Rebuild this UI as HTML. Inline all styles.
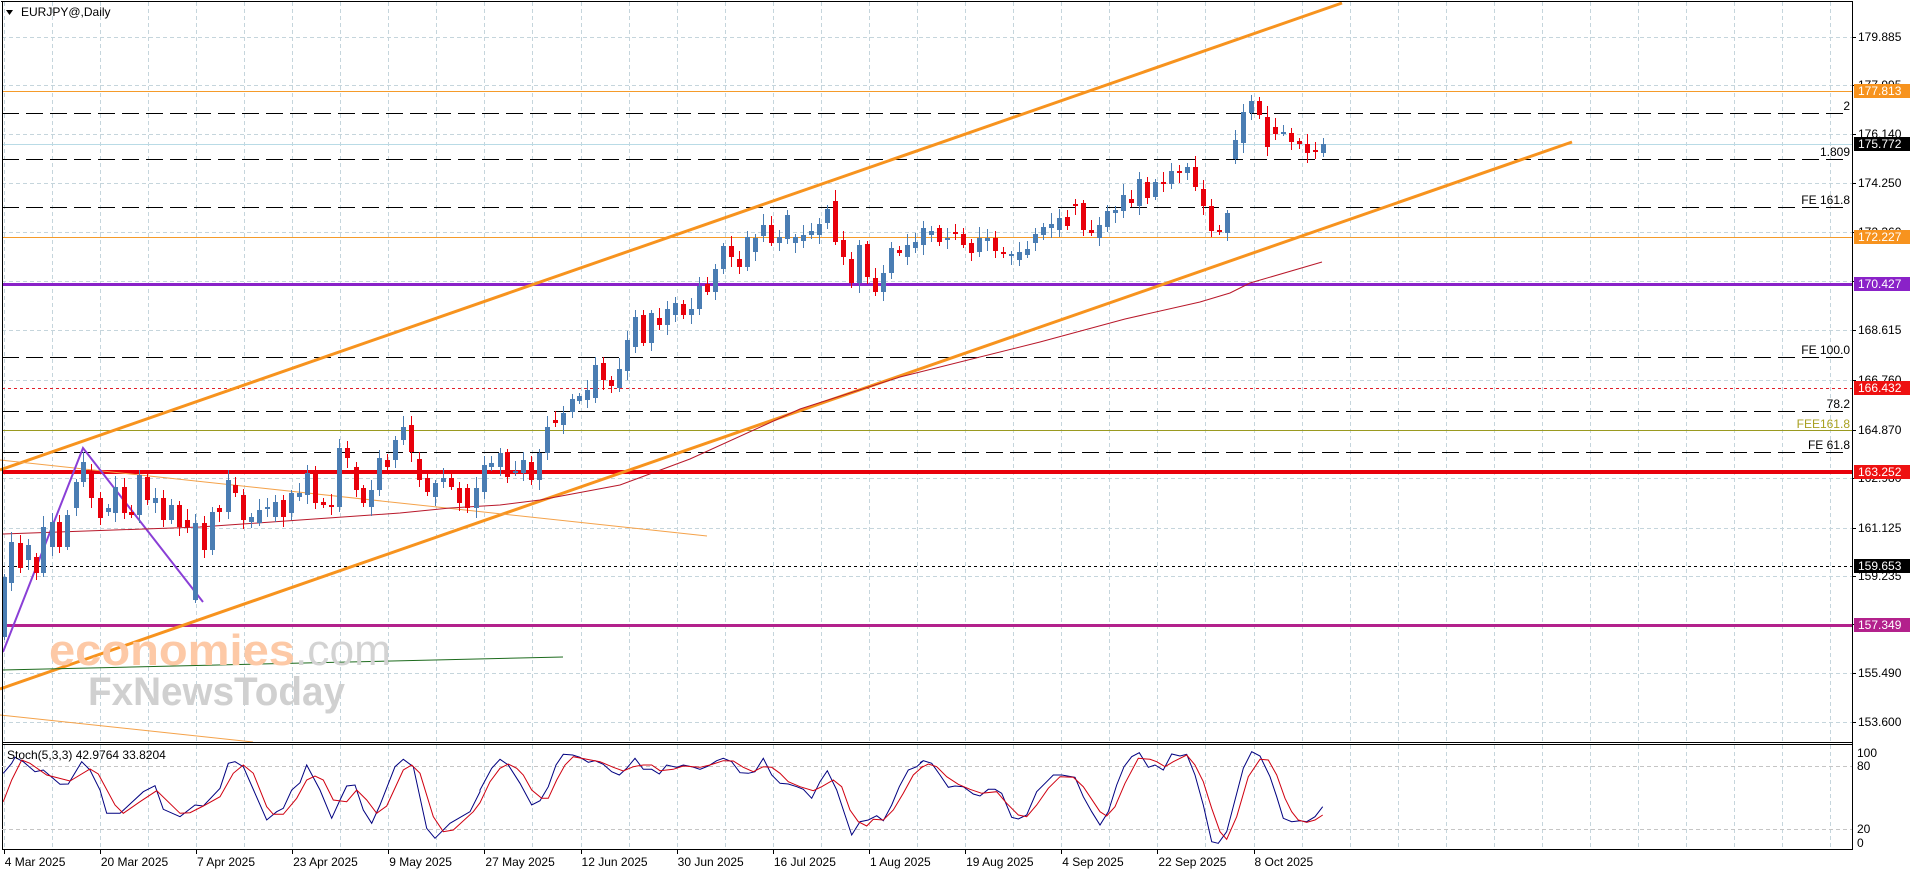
<!DOCTYPE html>
<html><head><meta charset="utf-8"><style>
html,body{margin:0;padding:0;background:#fff;}
svg{display:block;font-family:"Liberation Sans",sans-serif;}
</style></head><body>
<svg id="s" width="1916" height="874" xmlns="http://www.w3.org/2000/svg">
<rect width="1916" height="874" fill="#fff"/>
<g id="grid" stroke="#c5d5dc" stroke-width="1" stroke-dasharray="4,3"></g>
<g>
<line x1="2" y1="144.5" x2="1852" y2="144.5" stroke="#b9dbe6" stroke-width="1"/>
<line x1="2" y1="91.5" x2="1852" y2="91.5" stroke="#f59b2a" stroke-width="1"/>
<line x1="2" y1="237.5" x2="1852" y2="237.5" stroke="#f59b2a" stroke-width="1"/>
<g stroke="#000" stroke-width="1" stroke-dasharray="17,7">
<line x1="2" y1="113.5" x2="1850" y2="113.5"/>
<line x1="2" y1="159.5" x2="1850" y2="159.5"/>
<line x1="2" y1="207.5" x2="1850" y2="207.5"/>
<line x1="2" y1="357.5" x2="1850" y2="357.5"/>
<line x1="2" y1="411.5" x2="1850" y2="411.5"/>
<line x1="2" y1="452.5" x2="1850" y2="452.5"/>
</g>
<line x1="2" y1="430.5" x2="1852" y2="430.5" stroke="#9a9a20" stroke-width="1"/>
<line x1="2" y1="388.5" x2="1852" y2="388.5" stroke="#e0202a" stroke-width="1" stroke-dasharray="3,3"/>
<line x1="2" y1="566.5" x2="1852" y2="566.5" stroke="#000" stroke-width="1" stroke-dasharray="3,3"/>
<line x1="2" y1="284.5" x2="1852" y2="284.5" stroke="#8a22c8" stroke-width="3"/>
<line x1="2" y1="472" x2="1852" y2="472" stroke="#e8000b" stroke-width="4"/>
<line x1="2" y1="625.5" x2="1852" y2="625.5" stroke="#b3218c" stroke-width="3"/>
</g>
<line x1="0" y1="470" x2="1342" y2="3" stroke="#f7931e" stroke-width="3"/>
<line x1="0" y1="689" x2="1572" y2="142" stroke="#f7931e" stroke-width="3"/>
<line x1="0" y1="460" x2="707" y2="536" stroke="#f4a24a" stroke-width="1"/>
<line x1="0" y1="715" x2="253" y2="742" stroke="#f4a24a" stroke-width="1"/>
<line x1="2" y1="670" x2="563" y2="657" stroke="#1d6b1d" stroke-width="1"/>
<polyline points="3,652 83,448 203,602" fill="none" stroke="#8a3fd6" stroke-width="2"/>
<polyline fill="none" stroke="#b8182a" stroke-width="1" points="3,534 200,527 300,520 400,513 450,508 500,505 540,500 620,485 690,459 800,409 900,377 1040,342 1125,319 1200,302 1230,293 1250,283 1322,262"/>
<g id="candles"></g>
<text x="49" y="665" font-size="44" font-weight="bold" fill="#fdc9a6" textLength="246" lengthAdjust="spacingAndGlyphs">economies</text>
<text x="295" y="665" font-size="44" fill="#d3d3d3" textLength="96" lengthAdjust="spacingAndGlyphs">.com</text>
<text x="88" y="705" font-size="40" font-weight="bold" fill="#d0d0d0" textLength="257" lengthAdjust="spacingAndGlyphs">FxNewsToday</text>
<g font-size="12" fill="#000" text-anchor="end">
<text x="1850" y="110">2</text>
<text x="1850" y="156">1.809</text>
<text x="1850" y="204">FE 161.8</text>
<text x="1850" y="354">FE 100.0</text>
<text x="1850" y="408">78.2</text>
<text x="1850" y="428" fill="#a8a020">FEE161.8</text>
<text x="1850" y="449">FE 61.8</text>
</g>
<g stroke="#000" stroke-width="1" fill="none">
<line x1="1" y1="1.5" x2="1852" y2="1.5"/>
<line x1="2.5" y1="1" x2="2.5" y2="850"/>
<line x1="1852.5" y1="1" x2="1852.5" y2="850"/>
<line x1="2" y1="742.5" x2="1852" y2="742.5"/>
<line x1="2" y1="744.5" x2="1852" y2="744.5"/>
<line x1="2" y1="849.5" x2="1852" y2="849.5"/>
</g>
<g id="ticks" stroke="#000"></g>
<polygon points="6,10 13,10 9.5,15" fill="#000"/>
<text x="21" y="16" font-size="12" fill="#000">EURJPY@,Daily</text>
<g id="axis" font-size="12" fill="#000"></g>
<line x1="2" y1="766.5" x2="1852" y2="766.5" stroke="#c5c5c5" stroke-dasharray="4,3"/>
<line x1="2" y1="829.5" x2="1852" y2="829.5" stroke="#c5c5c5" stroke-dasharray="4,3"/>
<polyline id="st1" fill="none" stroke="#000080" stroke-width="1"/>
<polyline id="st2" fill="none" stroke="#d00010" stroke-width="1"/>
<text x="7" y="759" font-size="12" fill="#000">Stoch(5,3,3) 42.9764 33.8204</text>
<g font-size="12" fill="#000">
<text x="1857" y="757">100</text><text x="1857" y="770">80</text>
<text x="1857" y="833">20</text><text x="1857" y="847">0</text>
</g>
<g id="dates" font-size="12" fill="#000"></g>
</svg>
<script>
var NS="http://www.w3.org/2000/svg";
function el(p,t,a,txt){var e=document.createElementNS(NS,t);for(var k in a)e.setAttribute(k,a[k]);if(txt!=null)e.textContent=txt;p.appendChild(e);return e;}
var g=document.getElementById('grid');
for(var x=3.7;x<1852;x+=48.07){var xx=Math.round(x)+0.5;el(g,'line',{x1:xx,y1:2,x2:xx,y2:742});el(g,'line',{x1:xx,y1:745,x2:xx,y2:849});}
var hy=[37,85,134,183,232,281,330,380,430,478,528,576,624,673,722];
hy.forEach(function(y){el(g,'line',{x1:2,y1:y+0.5,x2:1852,y2:y+0.5});});
var tk=document.getElementById('ticks');
hy.forEach(function(y){el(tk,'line',{x1:1852,y1:y+0.5,x2:1856,y2:y+0.5});});
var ax=document.getElementById('axis');
var labs=[[37,'179.885'],[85,'177.995'],[134,'176.140'],[183,'174.250'],[232,'172.360'],[330,'168.615'],[380,'166.760'],[430,'164.870'],[478,'162.980'],[528,'161.125'],[576,'159.235'],[624,'157.345'],[673,'155.490'],[722,'153.600']];
labs.forEach(function(l){el(ax,'text',{x:1858,y:l[0]+4},l[1]);});
var boxes=[[91,'177.813','#f7931e','#fff'],[144,'175.772','#000','#fff'],[237,'172.227','#f7931e','#fff'],[284,'170.427','#8a22c8','#fff'],[388,'166.432','#ee1111','#fff'],[472,'163.252','#ee1111','#fff'],[566,'159.653','#000','#fff'],[625,'157.349','#b3218c','#fff']];
boxes.forEach(function(b){el(ax,'rect',{x:1854,y:b[0]-7,width:56,height:14,fill:b[2]});el(ax,'text',{x:1858,y:b[0]+4,fill:b[3]},b[1]);});
var B=[[4,577,637,'b'],[11,542,583,'b'],[20,543,568,'r'],[28,545,560,'b'],[36,557,573,'r'],[43,527,573,'b'],[52,522,547,'b'],[59,522,547,'r'],[67,515,547,'b'],[76,482,508,'b'],[83,462,482,'b'],[91,472,498,'r'],[100,498,518,'r'],[108,508,512,'b'],[115,487,513,'b'],[124,487,513,'r'],[131,512,515,'r'],[139,475,515,'b'],[147,477,500,'r'],[155,498,503,'b'],[163,498,520,'r'],[171,505,520,'b'],[179,505,527,'r'],[187,520,527,'r'],[195,523,600,'b'],[204,523,550,'r'],[212,512,550,'b'],[219,508,512,'r'],[228,480,512,'b'],[235,485,493,'r'],[243,495,520,'r'],[251,517,522,'b'],[259,510,523,'b'],[267,507,509,'b'],[275,502,517,'b'],[283,500,517,'r'],[291,493,513,'b'],[299,493,497,'b'],[307,473,495,'b'],[315,472,503,'r'],[323,502,505,'r'],[331,505,507,'r'],[339,448,507,'b'],[347,448,458,'r'],[356,467,490,'r'],[363,488,503,'r'],[371,490,507,'b'],[379,458,490,'b'],[387,460,467,'r'],[395,440,460,'b'],[403,427,440,'b'],[411,425,452,'r'],[419,459,480,'r'],[427,478,492,'r'],[435,483,497,'b'],[443,478,482,'b'],[451,478,487,'r'],[459,488,503,'r'],[467,488,508,'r'],[476,488,508,'b'],[484,465,492,'b'],[491,463,467,'b'],[500,453,467,'b'],[507,452,477,'r'],[515,471,473,'b'],[523,460,473,'b'],[531,462,480,'r'],[539,453,480,'b'],[547,427,453,'b'],[555,420,423,'r'],[563,413,425,'b'],[572,399,412,'b'],[579,396,401,'b'],[587,390,400,'b'],[595,365,398,'b'],[603,363,380,'r'],[611,380,386,'r'],[619,369,388,'b'],[627,340,371,'b'],[635,317,347,'b'],[643,315,343,'r'],[651,313,343,'b'],[659,318,325,'r'],[667,309,325,'b'],[675,303,315,'b'],[683,304,315,'r'],[691,309,315,'b'],[699,286,309,'b'],[707,284,292,'r'],[715,269,292,'b'],[723,246,269,'b'],[731,246,257,'r'],[739,259,267,'r'],[747,237,267,'b'],[755,238,252,'b'],[763,225,236,'b'],[771,225,243,'r'],[779,237,243,'b'],[787,215,239,'b'],[795,237,243,'b'],[803,235,241,'b'],[811,231,235,'b'],[819,224,235,'b'],[827,209,223,'b'],[835,201,242,'r'],[843,240,257,'r'],[851,259,283,'r'],[859,245,283,'b'],[867,244,277,'r'],[875,278,292,'r'],[883,273,292,'b'],[891,248,273,'b'],[899,250,253,'r'],[907,245,257,'b'],[915,242,248,'b'],[923,228,245,'b'],[931,231,235,'b'],[939,228,242,'r'],[947,238,240,'b'],[955,232,234,'r'],[963,234,245,'r'],[971,243,253,'r'],[979,238,252,'b'],[987,238,241,'b'],[995,238,251,'r'],[1003,252,254,'r'],[1011,254,256,'b'],[1019,252,260,'b'],[1027,249,255,'b'],[1035,234,243,'b'],[1043,227,235,'b'],[1051,224,228,'b'],[1059,218,230,'b'],[1067,217,226,'r'],[1075,204,206,'r'],[1083,203,230,'r'],[1091,230,233,'r'],[1099,225,238,'b'],[1107,211,227,'b'],[1115,210,213,'b'],[1123,195,211,'b'],[1131,199,203,'r'],[1139,179,206,'b'],[1147,182,198,'r'],[1155,182,197,'b'],[1163,182,184,'r'],[1171,171,184,'b'],[1179,171,173,'r'],[1187,167,173,'b'],[1195,167,187,'r'],[1203,189,206,'r'],[1211,206,231,'r'],[1219,230,232,'r'],[1227,213,233,'b'],[1235,140,159,'b'],[1243,112,143,'b'],[1251,101,113,'b'],[1259,101,115,'r'],[1267,117,147,'r'],[1275,127,134,'r'],[1283,132,133,'b'],[1291,133,142,'r'],[1299,141,144,'r'],[1307,144,153,'r'],[1315,150,152,'r'],[1323,144,153,'b']];
var cg=document.getElementById('candles');
B.forEach(function(c,i){var col=c[3]=='b'?'#4a7db3':'#e8000b';var up=3+((i*7)%9),dn=3+((i*5)%8);
el(cg,'line',{x1:c[0]+0.5,y1:c[1]-up,x2:c[0]+0.5,y2:c[2]+dn,stroke:col,'stroke-width':1});
el(cg,'rect',{x:c[0]-2,y:c[1],width:5,height:Math.max(2,c[2]-c[1]),fill:col});});
function pts(arr,ox,oy){return arr.map(function(p){return (ox+p[0]/3).toFixed(1)+','+(oy+p[1]/3).toFixed(1);}).join(' ');}
var n3=[[10,820],[35,790],[45,772],[70,785],[105,815],[130,810],[180,853],[205,852],[245,785],[270,810],[300,870],[320,940],[360,940],[430,875],[465,857],[490,928],[540,950],[585,915],[610,918],[660,865],[685,790],[705,785],[730,800],[765,880],[800,960],[830,935],[850,925],[875,870],[900,848],[920,795],[960,870],[995,955],[1020,900],[1040,858],[1065,855],[1090,930],[1115,970],[1140,915],[1185,800],[1210,778],[1240,800],[1280,985],[1305,1015],[1350,970],[1410,935],[1440,875]];
var r3=[[10,905],[35,840],[65,780],[90,790],[140,825],[210,843],[270,807],[295,822],[345,915],[370,940],[420,905],[470,872],[540,940],[570,938],[610,918],[660,890],[700,820],[730,795],[760,820],[800,920],[820,943],[850,943],[890,895],[920,840],[945,828],[970,840],[1000,900],[1040,905],[1070,870],[1100,900],[1130,940],[1160,918],[1210,810],[1235,795],[1260,820],[1300,950],[1330,995],[1360,990],[1420,935]];
var n7=[[0,150],[35,85],[60,58],[85,75],[120,130],[155,195],[180,182],[205,140],[228,75],[250,43],[278,45],[300,52],[325,67],[345,62],[370,73],[395,95],[418,105],[440,85],[465,55],[490,88],[515,88],[538,102],[560,75],[590,82],[610,75],[635,80],[660,88],[685,78],[710,62],[730,55],[755,65],[780,98],[805,100],[825,95],[850,55],[875,105],[900,130],[925,132],[950,140],[970,148],[995,175],[1020,125],[1042,92],[1070,150],[1095,225],[1115,285],[1140,245],[1165,240],[1190,227],[1210,242],[1235,195],[1258,140],[1285,90],[1310,80],[1330,62]];
var r7=[[0,188],[30,125],[60,85],[85,72],[110,85],[130,105],[155,150],[185,175],[205,175],[230,120],[255,75],[280,50],[320,58],[360,65],[400,82],[430,93],[460,80],[490,75],[515,75],[540,92],[580,88],[610,78],[660,82],[690,75],[730,62],[760,63],[790,82],[820,95],[850,80],[875,82],[900,100],[925,125],[960,140],[1000,152],[1025,140],[1060,120],[1085,140],[1110,210],[1135,245],[1160,258],[1180,238],[1210,240],[1240,210],[1270,160],[1300,105],[1330,78]];
var n8=[[0,68],[10,62],[35,70],[60,105],[85,142],[105,138],[130,140],[160,162],[180,168],[205,148],[225,148],[245,160],[275,232],[295,237],[320,225],[350,155],[380,125],[400,105],[425,105],[465,112],[490,170],[515,215],[540,255],[565,215],[590,135],[612,80],[635,50],[658,38],[685,82],[705,75],[730,90],[755,42],[780,48],[800,43],[825,105],[850,195],[875,305],[895,310],[920,275],[945,180],[970,85],[995,35],[1020,48],[1050,110],[1070,170],[1090,235],[1115,245],[1140,242],[1160,245],[1185,230],[1208,200]];
var r8=[[0,85],[25,72],[50,80],[80,110],[115,133],[150,148],[185,160],[230,155],[260,190],[295,225],[320,230],[350,195],[385,145],[420,110],[460,112],[490,140],[540,215],[560,228],[585,200],[615,130],[655,55],[690,58],[710,65],[735,80],[760,65],[800,45],[825,75],[850,125],[875,205],[900,275],[920,298],[950,230],[985,110],[1020,58],[1045,60],[1070,105],[1095,175],[1115,215],[1135,240],[1160,247],[1185,240],[1208,225]];
document.getElementById('st1').setAttribute('points',pts(n3,0,500)+' '+pts(n7,480,740)+' '+pts(n8,920,740));
document.getElementById('st2').setAttribute('points',pts(r3,0,500)+' '+pts(r7,480,740)+' '+pts(r8,920,740));
var dl=['4 Mar 2025','20 Mar 2025','7 Apr 2025','23 Apr 2025','9 May 2025','27 May 2025','12 Jun 2025','30 Jun 2025','16 Jul 2025','1 Aug 2025','19 Aug 2025','4 Sep 2025','22 Sep 2025','8 Oct 2025'];
var dg=document.getElementById('dates');
dl.forEach(function(d,i){var x=3.7+96.14*i;el(dg,'text',{x:x+1,y:866},d);el(tk,'line',{x1:Math.round(x)+0.5,y1:850,x2:Math.round(x)+0.5,y2:854});});
</script>
</body></html>
